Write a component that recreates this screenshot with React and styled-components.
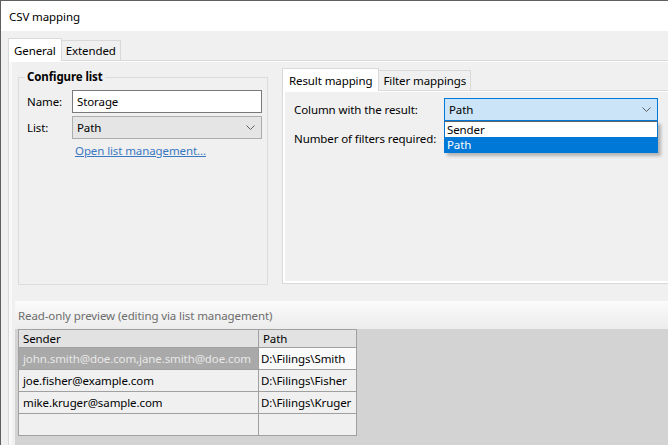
import styled, { createGlobalStyle } from "styled-components";

const font = `"Noto Sans", "Open Sans", sans-serif`;

const Global = createGlobalStyle`
  html, body {
    margin: 0;
    padding: 0;
    background: #f0f0f0;
  }
  body {
    font-family: ${font};
    font-size: 11.5px;
    letter-spacing: -0.1px;
    color: #000;
  }
`;

const Window = styled.div`
  width: 668px;
  height: 445px;
  box-sizing: border-box;
  border-top: 1px solid #5f5f5f;
  border-left: 1px solid #5f5f5f;
  display: flex;
  flex-direction: column;
  overflow: hidden;
  background: #f0f0f0;
`;

const TitleBar = styled.div`
  height: 30px;
  flex: none;
  background: #fff;
  display: flex;
  align-items: center;
  padding-left: 8px;
`;

const Body = styled.div`
  flex: 1;
  padding: 7px 0 0 7px;
  display: flex;
  flex-direction: column;
  min-height: 0;
`;

const TabStrip = styled.div`
  display: flex;
  align-items: flex-end;
  flex: none;
`;

const Tab = styled.div`
  box-sizing: border-box;
  height: ${(p) => (p.$active ? 23 : 20)}px;
  margin-bottom: ${(p) => (p.$active ? -1 : 0)}px;
  margin-left: ${(p) => (p.$first ? 0 : -1)}px;
  padding: 0 ${(p) => p.$pad ?? 7}px;
  border: 1px solid #d9d9d9;
  border-bottom: none;
  background: ${(p) => (p.$active ? "#fff" : "#f0f0f0")};
  position: relative;
  z-index: ${(p) => (p.$active ? 1 : 0)};
  display: flex;
  align-items: center;
  white-space: nowrap;
`;

const OuterPage = styled.div`
  flex: 1;
  width: 720px;
  border-top: 1px solid #d9d9d9;
  border-left: 1px solid #d9d9d9;
  box-shadow: inset 0 1px 0 #fff, inset 3px 0 0 #f8f8f8;
  display: flex;
  flex-direction: column;
`;

const TopRow = styled.div`
  display: flex;
  align-items: flex-start;
  padding: 7px 0 0 9px;
`;

const GroupBox = styled.fieldset`
  box-sizing: border-box;
  width: 249px;
  height: 216px;
  margin: 1px 0 0 0;
  padding: 5px 5px 0 8px;
  border: 1px solid #dcdcdc;
  display: flex;
  flex-direction: column;
  gap: 3px;
`;

const Legend = styled.legend`
  font-weight: bold;
  padding: 0 2px;
  margin-left: -2px;
  line-height: 16px;
`;

const FieldRow = styled.div`
  display: flex;
  align-items: center;
`;

const Label = styled.div`
  width: ${(p) => p.$w}px;
  flex: none;
  white-space: nowrap;
`;

const TextBox = styled.div`
  box-sizing: border-box;
  width: ${(p) => p.$w}px;
  height: 23px;
  background: #fff;
  border: 1px solid #7a7a7a;
  padding-left: 4px;
  display: flex;
  align-items: center;
`;

const Combo = styled.div`
  box-sizing: border-box;
  width: ${(p) => p.$w}px;
  height: 23px;
  background: ${(p) => (p.$focus ? "#cce4f7" : "#e5e5e5")};
  border: 1px solid ${(p) => (p.$focus ? "#0078d7" : "#adadad")};
  padding: 0 6px 0 4px;
  display: flex;
  align-items: center;
  justify-content: space-between;
`;

const ComboWrap = styled.div`
  position: relative;
`;

const DropList = styled.div`
  position: absolute;
  top: 100%;
  left: 0;
  width: ${(p) => p.$w}px;
  box-sizing: border-box;
  border: 1px solid #0078d7;
  border-top: 1px solid #646464;
  background: #fff;
  box-shadow: 3px 3px 3px rgba(0, 0, 0, 0.25);
  z-index: 5;
`;

const DropItem = styled.div`
  height: 15px;
  line-height: 15px;
  padding-left: 2px;
  background: ${(p) => (p.$sel ? "#0078d7" : "#fff")};
  color: ${(p) => (p.$sel ? "#fff" : "#000")};
`;

const Link = styled.a`
  color: #3a78c2;
  text-decoration: underline;
  margin: 1px 0 0 48px;
  line-height: 16px;
  cursor: pointer;
`;

const InnerTabs = styled.div`
  margin-left: 14px;
  display: flex;
  flex-direction: column;
`;

const InnerPage = styled.div`
  box-sizing: border-box;
  width: 420px;
  height: 194px;
  border: 1px solid #d9d9d9;
  box-shadow: inset 0 1px 0 #fff, inset 2px 0 0 #fff, inset 0 -2px 0 #fff;
  padding: 7px 0 0 11px;
  display: flex;
  flex-direction: column;
  gap: 10px;
`;

const Preview = styled.div`
  margin: 16px 0 0 6px;
  display: flex;
  flex-direction: column;
  flex: 1;
`;

const PreviewHeader = styled.div`
  height: 28px;
  display: flex;
  align-items: center;
  padding-left: 3px;
  color: #6d6d6d;
  background: linear-gradient(#fbfbfb, #ececec);
`;

const GridArea = styled.div`
  flex: 1;
  background: #d3d3d3;
  padding-left: 3px;
`;

const Grid = styled.table`
  border-collapse: collapse;
  table-layout: fixed;
  width: 339px;
`;

const Th = styled.th`
  height: 17px;
  padding: 0 0 0 4px;
  text-align: left;
  font-weight: normal;
  background: #e2e2e2;
  border: 1px solid #a0a0a0;
  white-space: nowrap;
`;

const Td = styled.td`
  height: 21px;
  padding: 0 0 0 ${(p) => p.$pl || 4}px;
  background: ${(p) => (p.$sel ? "#a9a9a9" : p.$bg || "#f0f0f0")};
  color: ${(p) => (p.$sel ? "#e8e8e8" : "#000")};
  border: 1px solid #a0a0a0;
  white-space: nowrap;
  overflow: hidden;
`;

const Chevron = () => (
  <svg width="9" height="5" viewBox="0 0 9 5">
    <path d="M0.5 0.5 L4.5 4.5 L8.5 0.5" fill="none" stroke="#606060" strokeWidth="1" />
  </svg>
);

const rows = [
  ["john.smith@doe.com,jane.smith@doe.com", "D:\\Filings\\Smith", true],
  ["joe.fisher@example.com", "D:\\Filings\\Fisher"],
  ["mike.kruger@sample.com", "D:\\Filings\\Kruger"],
  ["", ""],
];

export default function App() {
  return (
    <>
      <Global />
      <Window>
        <TitleBar>CSV mapping</TitleBar>
        <Body>
          <TabStrip>
            <Tab $active $first $pad={5}>General</Tab>
            <Tab $pad={4}>Extended</Tab>
          </TabStrip>
          <OuterPage>
            <TopRow>
              <GroupBox>
                <Legend>Configure list</Legend>
                <FieldRow>
                  <Label $w={45}>Name:</Label>
                  <TextBox $w={190}>Storage</TextBox>
                </FieldRow>
                <FieldRow>
                  <Label $w={45}>List:</Label>
                  <Combo $w={190}>
                    <span>Path</span>
                    <Chevron />
                  </Combo>
                </FieldRow>
                <FieldRow>
                  <Link>Open list management...</Link>
                </FieldRow>
              </GroupBox>
              <InnerTabs>
                <TabStrip>
                  <Tab $active $first $pad={6}>Result mapping</Tab>
                  <Tab $pad={4}>Filter mappings</Tab>
                </TabStrip>
                <InnerPage>
                  <FieldRow>
                    <Label $w={150}>Column with the result:</Label>
                    <ComboWrap>
                      <Combo $w={214} $focus>
                        <span>Path</span>
                        <Chevron />
                      </Combo>
                      <DropList $w={214}>
                        <DropItem>Sender</DropItem>
                        <DropItem $sel>Path</DropItem>
                      </DropList>
                    </ComboWrap>
                  </FieldRow>
                  <FieldRow>
                    <Label $w={150}>Number of filters required:</Label>
                  </FieldRow>
                </InnerPage>
              </InnerTabs>
            </TopRow>
            <Preview>
              <PreviewHeader>Read-only preview (editing via list management)</PreviewHeader>
              <GridArea>
                <Grid>
                  <colgroup>
                    <col style={{ width: 240 }} />
                    <col style={{ width: 98 }} />
                  </colgroup>
                  <thead>
                    <tr>
                      <Th>Sender</Th>
                      <Th>Path</Th>
                    </tr>
                  </thead>
                  <tbody>
                    {rows.map(([s, p, sel], i) => (
                      <tr key={i}>
                        <Td $sel={sel}>{s}</Td>
                        <Td $pl={2} $bg={sel ? "#fafafa" : undefined}>{p}</Td>
                      </tr>
                    ))}
                  </tbody>
                </Grid>
              </GridArea>
            </Preview>
          </OuterPage>
        </Body>
      </Window>
    </>
  );
}
